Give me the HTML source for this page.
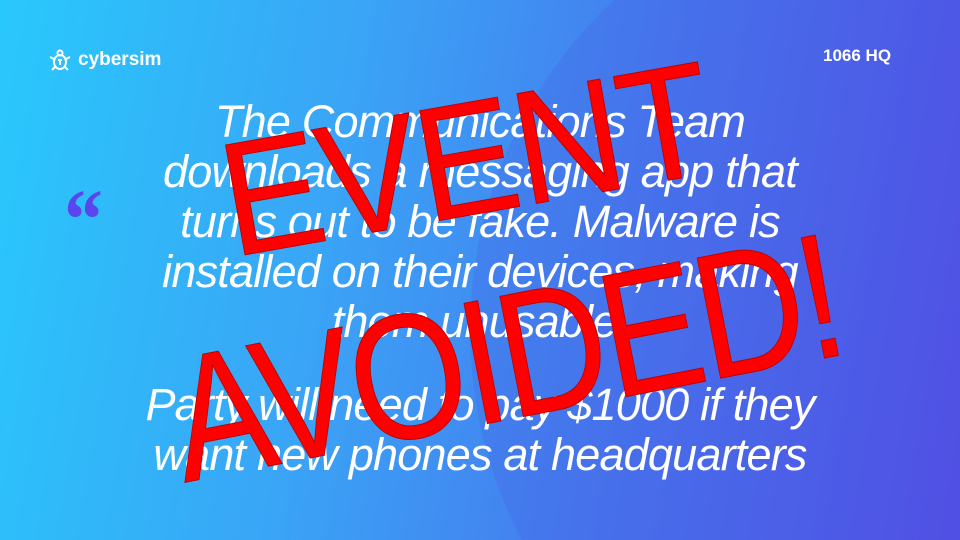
<!DOCTYPE html>
<html><head><meta charset="utf-8"><style>
*{margin:0;padding:0}
html,body{width:960px;height:540px;overflow:hidden}
body{position:relative;font-family:"Liberation Sans",sans-serif;
background:linear-gradient(100deg,#29c8fc 0%,#3aa4f6 35%,#4679ee 65%,#5350e6 100%);}
.shape{position:absolute;left:470px;top:-120px;width:900px;height:900px;border-radius:50%;background:rgba(70,80,220,0.18)}
.logo{position:absolute;left:48px;top:48px;color:#fff;font-weight:bold;font-size:19px;display:flex;align-items:center;gap:6px}
.hq{position:absolute;left:823px;top:46px;color:#fff;font-weight:bold;font-size:17px}
.q{position:absolute;left:62px;top:176px;color:#5b45ee;font-size:86px;font-weight:bold;font-family:"Liberation Serif",serif;line-height:1;transform:scaleX(0.9)}
.txt{position:absolute;left:40px;width:880px;text-align:center;color:#fff;font-style:italic;font-size:45px;line-height:50px;letter-spacing:-0.8px;white-space:nowrap}
.red{position:absolute;color:#ff0000;line-height:1;white-space:nowrap;-webkit-text-stroke:1px #c00000}
</style></head><body>
<div class="shape"></div>
<div class="logo"><svg width="24" height="24" viewBox="0 0 24 24" fill="none" stroke="#fff" stroke-width="2"><circle cx="12" cy="5" r="2.5"/><ellipse cx="12" cy="14" rx="6" ry="7"/><path d="M6 11L2 9M18 11l4-2M7 19l-3 3M17 19l3 3M10 12h4M12 12v5"/></svg>cybersim</div>
<div class="hq">1066 HQ</div>
<div class="q">“</div>
<div class="txt" style="top:97px">The Communications Team<br>downloads a messaging app that<br>turns out to be fake. Malware is<br>installed on their devices, making<br>them unusable.</div>
<div class="txt" style="top:380px">Party will need to pay $1000 if they<br>want new phones at headquarters</div>
<div class="red" style="font-size:162px;letter-spacing:-2px;left:466px;top:160px;transform:translate(-50%,-50%) rotate(-10deg) scaleX(0.93)">EVENT</div>
<div class="red" style="font-size:178px;letter-spacing:-4px;left:505px;top:358px;transform:translate(-50%,-50%) rotate(-11deg) scaleX(0.84)">AVOIDED!</div>
</body></html>
